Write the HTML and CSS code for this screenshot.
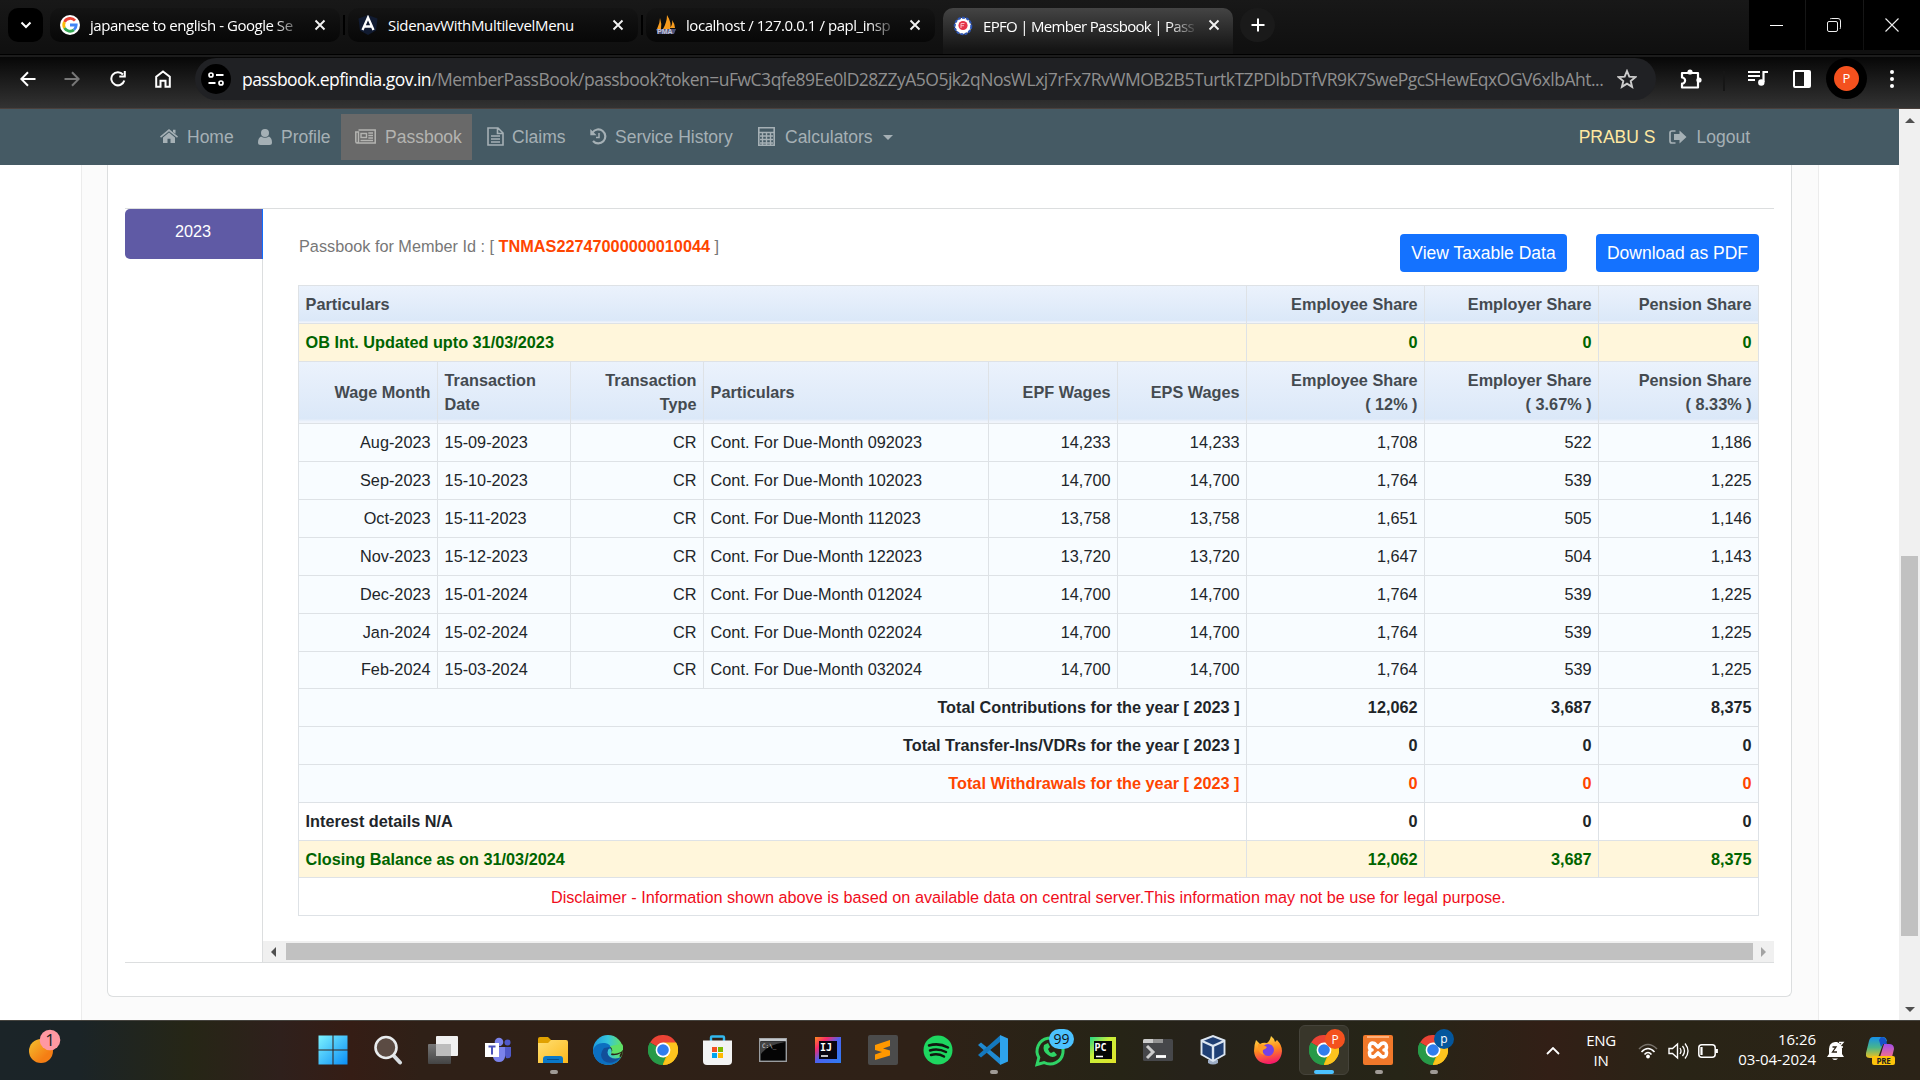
FILE: index.html
```html
<!DOCTYPE html>
<html lang="en">
<head>
<meta charset="utf-8">
<title>EPFO | Member Passbook | Passbook</title>
<link rel="stylesheet" href="styles.css">
</head>
<body>
<svg width="0" height="0" class="defs">
  <defs>
    <linearGradient id="gwin" x1="0" y1="0" x2="1" y2="1"><stop offset="0" stop-color="#7df3ff"/><stop offset="1" stop-color="#0a8df5"/></linearGradient>
    <linearGradient id="gfold" x1="0" y1="0" x2="1" y2="1"><stop offset="0" stop-color="#ffdf72"/><stop offset="1" stop-color="#fbb81c"/></linearGradient>
    <linearGradient id="gedge" x1="0" y1="0" x2="1" y2="0"><stop offset="0" stop-color="#1c9be0"/><stop offset=".5" stop-color="#36c6dc"/><stop offset="1" stop-color="#67e65a"/></linearGradient>
    <linearGradient id="gij" x1="0" y1="0" x2="1" y2="1"><stop offset="0" stop-color="#ff8a1c"/><stop offset=".25" stop-color="#f72a6b"/><stop offset=".5" stop-color="#4a63f0"/><stop offset="1" stop-color="#2f7cf2"/></linearGradient>
    <linearGradient id="gpc" x1="0" y1="0" x2="1" y2="1"><stop offset="0" stop-color="#21d789"/><stop offset=".4" stop-color="#c9ef3a"/><stop offset="1" stop-color="#dfe32a"/></linearGradient>
    <linearGradient id="gff" x1="0.3" y1="0" x2=".5" y2="1"><stop offset="0" stop-color="#ffe14a"/><stop offset=".5" stop-color="#ff8a1e"/><stop offset="1" stop-color="#f5156c"/></linearGradient>
    <linearGradient id="gcop" x1="0" y1="0" x2="0" y2="1"><stop offset="0" stop-color="#1690e8"/><stop offset=".5" stop-color="#49b58a"/><stop offset="1" stop-color="#f2c11c"/></linearGradient>
    <linearGradient id="gcop2" x1="0" y1="0" x2="0" y2="1"><stop offset="0" stop-color="#a14de8"/><stop offset="1" stop-color="#f4708c"/></linearGradient>
    <linearGradient id="gsun" x1="0" y1="0" x2="1" y2="1"><stop offset="0" stop-color="#f4c22f"/><stop offset=".7" stop-color="#f57e14"/></linearGradient>
    <linearGradient id="gview" x1="0" y1="0" x2="0" y2="1"><stop offset="0" stop-color="#777"/><stop offset="1" stop-color="#444"/></linearGradient>
    <symbol id="chrome" viewBox="0 0 30 30">
      <path d="M15 15L2 7.500A15 15 0 0 1 28 7.500z" fill="#ea4335"/>
      <path d="M15 15L28 7.500A15 15 0 0 1 15 30z" fill="#fbbc05"/>
      <path d="M15 15L15 30A15 15 0 0 1 2 7.500z" fill="#2a9e4b"/>
      <path d="M15 7.500H28A15 15 0 0 1 15 30L21.500 18.700z" fill="#fcc31e"/>
      <path d="M2 7.500L8.500 18.700A7.500 7.500 0 0 0 18 21.800L14.500 30A15 15 0 0 1 2 7.500z" fill="#279a48"/>
      <circle cx="15" cy="15" r="7.400" fill="#fff"/><circle cx="15" cy="15" r="5.800" fill="#2f7ded"/>
    </symbol>
    <symbol id="x" viewBox="0 0 12 12"><path d="M1.500 1.500l9 9M10.500 1.500l-9 9" stroke="#f2f2f2" stroke-width="1.900" fill="none"/></symbol>
  </defs>
</svg>

<header class="tabstrip">
  <div class="tab-search"><svg width="12" height="8" viewBox="0 0 12 8"><path d="M1.500 1.500L6 6l4.500-4.500" fill="none" stroke="#fff" stroke-width="2"/></svg></div>
  <div class="tab tab-a">
    <svg class="fav" width="20" height="20" viewBox="0 0 20 20"><circle cx="10" cy="10" r="10" fill="#fff"/><path d="M15 5.700A6.300 6.300 0 0 0 4.500 7" fill="none" stroke="#ea4335" stroke-width="2.800"/><path d="M4.500 7a6.300 6.300 0 0 0 0 6" fill="none" stroke="#fbbc05" stroke-width="2.800"/><path d="M4.500 13A6.300 6.300 0 0 0 14 14.800" fill="none" stroke="#34a853" stroke-width="2.800"/><path d="M14 14.800a6.300 6.300 0 0 0 2.200-4.800H10" fill="none" stroke="#4285f4" stroke-width="2.800"/></svg>
    <span class="tab-title fade">japanese to english - Google Se</span>
    <svg class="close" width="12" height="12"><use href="#x"/></svg>
  </div>
  <i class="tab-sep"></i>
  <div class="tab tab-b">
    <svg class="fav" width="20" height="20" viewBox="0 0 20 20"><path d="M10 0l9.500 3.500-1.500 12L10 20l-8-4.500-1.500-12z" fill="#111b31"/><path d="M4.500 15L10 2.500 15.500 15M6.500 11.500h7" fill="none" stroke="#fff" stroke-width="2.300"/></svg>
    <span class="tab-title">SidenavWithMultilevelMenu</span>
    <svg class="close" width="12" height="12"><use href="#x"/></svg>
  </div>
  <i class="tab-sep"></i>
  <div class="tab tab-c">
    <svg class="fav" width="20" height="20" viewBox="0 0 20 20"><path d="M1 14Q4 8 4 3q2 6 1 11zM7 14q4-7 4-14 5 8 3 14zM14 13q3-4 2-8 3 4 3 8z" fill="#f89c1e"/><path d="M0 14h20l-2 5H2z" fill="#4f5479"/><text x="1" y="19" class="pma">PMA</text></svg>
    <span class="tab-title fade">localhost / 127.0.0.1 / papl_insp</span>
    <svg class="close" width="12" height="12"><use href="#x"/></svg>
  </div>
  <div class="tab tab-d">
    <svg class="fav" width="20" height="20" viewBox="0 0 20 20"><circle cx="10" cy="10" r="8.300" fill="#fff" stroke="#2d55b5" stroke-width="2" stroke-dasharray="3 1.200"/><circle cx="10" cy="9.500" r="4.600" fill="#e5344a"/><path d="M8 12V7.500h3.500M8 9.700h3" stroke="#f7b8bf" fill="none"/></svg>
    <span class="tab-title fade">EPFO | Member Passbook | Pass</span>
    <svg class="close" width="12" height="12"><use href="#x"/></svg>
  </div>
  <div class="new-tab"><svg width="14" height="14" viewBox="0 0 14 14"><path d="M7 .5v13M.5 7h13" stroke="#fff" stroke-width="2"/></svg></div>
  <div class="win-buttons">
    <span class="wb"><svg width="14" height="14"><path d="M0 7.500h13" stroke="#fff"/></svg></span>
    <span class="wb"><svg width="14" height="14" viewBox="0 0 14 14"><path d="M.5 5q0-1.500 1.500-1.500h7q1.500 0 1.500 1.500v7q0 1.500-1.500 1.500H2Q.5 13.500.5 12zM3 1q.5-.5 1.500-.5H11Q13.500.5 13.500 3v6.500q0 1-.7 1.500" fill="none" stroke="#eee"/></svg></span>
    <span class="wb"><svg width="14" height="14"><path d="M.5.500l13 13M13.500.500l-13 13" stroke="#eee" stroke-width="1.100"/></svg></span>
  </div>
</header>

<div class="toolbar">
  <svg class="tb back" width="16" height="16" viewBox="0 0 16 16"><path d="M15.500 8H1.500M8 1.200L1.300 8 8 14.800" fill="none" stroke="#fff" stroke-width="2"/></svg>
  <svg class="tb fwd" width="16" height="16" viewBox="0 0 16 16"><path d="M.5 8h14M8 1.200L14.700 8 8 14.800" fill="none" stroke="#777" stroke-width="2"/></svg>
  <svg class="tb reload" width="16" height="16" viewBox="0 0 16 16"><path d="M14.300 9.500A6.600 6.600 0 1 1 13 3.500" fill="none" stroke="#fff" stroke-width="2"/><path d="M15.800 0v6.500H9.300V4.600h4.500V0z" fill="#fff"/></svg>
  <svg class="tb home" width="16" height="18" viewBox="0 0 16 18"><path d="M1.200 16.800V6.800L8 1.500l6.800 5.300v10h-4.300v-6h-5v6z" fill="none" stroke="#fff" stroke-width="2"/></svg>
  <div class="omnibox">
    <span class="site"><svg width="16" height="14" viewBox="0 0 16 14"><circle cx="3" cy="3" r="2" fill="none" stroke="#fff" stroke-width="1.700"/><path d="M8 3h7.500M.5 11h7" stroke="#fff" stroke-width="1.800"/><circle cx="13" cy="11" r="2" fill="none" stroke="#fff" stroke-width="1.700"/></svg></span>
    <span class="url"><b>passbook.epfindia.gov.in</b><span class="path">/MemberPassBook/passbook?token=uFwC3qfe89Ee0lD28ZZyA5O5jk2qNosWLxj7rFx7RvWMOB2B5TurtkTZPDIbDTfVR9K7SwePgcSHewEqxOGV6xlbAht...</span></span>
    <svg class="star" width="20" height="20" viewBox="0 0 20 20"><path d="M10 2l2.300 5.600 6 .5-4.600 3.900 1.400 5.900L10 14.700l-5.100 3.200 1.400-5.900L1.700 8.100l6-.5z" fill="none" stroke="#ccc" stroke-width="1.900"/></svg>
  </div>
  <svg class="tb puzzle" width="22" height="22" viewBox="0 0 22 22"><path d="M2 5h16v14.500H2v-3.800a3 3 0 0 0 0-6.200z" fill="none" stroke="#fff" stroke-width="2.200" stroke-linejoin="round"/><circle cx="10" cy="4" r="2.600" fill="#fff"/><circle cx="19" cy="12" r="2.600" fill="#fff"/></svg>
  <i class="tb-sep"></i>
  <svg class="tb music" width="20" height="16" viewBox="0 0 20 16"><path d="M0 2h12M0 6h12M0 10h7" stroke="#fff" stroke-width="1.900"/><path d="M15.500 12V2H20" fill="none" stroke="#fff" stroke-width="2.200"/><circle cx="13.300" cy="12.500" r="3.200" fill="#fff"/></svg>
  <svg class="tb panel" width="18" height="18" viewBox="0 0 18 18"><rect x="1" y="1" width="16" height="16" rx="1" fill="none" stroke="#fff" stroke-width="2"/><path d="M11 1h6v16h-6z" fill="#fff"/></svg>
  <span class="avatar"><span>P</span></span>
  <svg class="tb dots" width="4" height="18" viewBox="0 0 4 18"><circle cx="2" cy="2" r="2" fill="#fff"/><circle cx="2" cy="9" r="2" fill="#fff"/><circle cx="2" cy="16" r="2" fill="#fff"/></svg>
</div>

<div class="viewport">
  <div class="site-page">
    <nav class="nav">
      <a class="n-home"><svg width="18" height="15" viewBox="0 0 18 15"><path d="M9 0l9 7.500-1 1.200L9 2.200 1 8.700 0 7.500zM13 .8h2.500v4L13 3zM9 3.500l6 5V14h-4.500v-4.300h-3V14H3V8.500z" fill="currentColor"/></svg><span>Home</span></a>
      <a class="n-profile"><svg width="14" height="16" viewBox="0 0 14 16"><circle cx="7" cy="4" r="4" fill="currentColor"/><path d="M3 7.500Q7 10 11 7.500q3 1.500 3 6 0 2.500-2.500 2.500h-9Q0 16 0 13.500q0-4.500 3-6z" fill="currentColor"/></svg><span>Profile</span></a>
      <a class="n-pass"><svg width="21" height="15" viewBox="0 0 21 15"><path d="M3.500 1h16.700v13H2Q.8 14 .8 12.500V3H3.500v9.500q0 1.500-1.500 1.500" fill="none" stroke="currentColor" stroke-width="1.500"/><path d="M6 4.500h5.500v4H6zM13.300 4h4.700M13.300 6.500h4.700M13.300 9h4.700M5.500 11.500h12.500" fill="none" stroke="currentColor" stroke-width="1.400"/></svg><span>Passbook</span></a>
      <a class="n-claims"><svg width="17" height="19" viewBox="0 0 17 19"><path d="M1 1h10l5 5v12H1zM10.500 1v5.500H16M4 9h9M4 12h9M4 15h9" fill="none" stroke="currentColor" stroke-width="1.600"/></svg><span>Claims</span></a>
      <a class="n-history"><svg width="17" height="17" viewBox="0 0 17 17"><path d="M2.500 4.500A7 7 0 1 1 3 13" fill="none" stroke="currentColor" stroke-width="2.200"/><path d="M.3 1v6.300h6.300z" fill="currentColor"/><path d="M9 5v4.500H6" fill="none" stroke="currentColor" stroke-width="1.500"/></svg><span>Service History</span></a>
      <a class="n-calc"><svg width="17" height="19" viewBox="0 0 17 19"><path d="M.8.800h15.400v17.400H.8zM.8 5.500h15.400" fill="none" stroke="currentColor" stroke-width="1.600"/><path d="M2 9h13M2 12.500h13M2 16h13M4.500 6v12M8.500 6v12M12.500 6v12" stroke="currentColor" stroke-width="1.400"/></svg><span>Calculators</span><i class="caret"></i></a>
      <span class="user">PRABU S</span>
      <a class="n-logout"><svg width="18" height="14" viewBox="0 0 18 14"><path d="M6.500 1H3Q1 1 1 3v8q0 2 2 2h3.500" fill="none" stroke="currentColor" stroke-width="1.700"/><path d="M10.500.5L17.500 7l-7 6.500V10H5V4h5.500z" fill="currentColor"/></svg><span>Logout</span></a>
    </nav>
    <main class="outer">
      <section class="card">
        <div class="panel-box">
          <div class="years"><a class="year">2023</a></div>
          <div class="pane">
            <div class="pane-head">
              <p>Passbook for Member Id : [ <strong>TNMAS22747000000010044</strong> ]</p>
              <div class="btns"><button>View Taxable Data</button><button>Download as PDF</button></div>
            </div>
            <table class="book">
              <colgroup><col class="c1"><col class="c2"><col class="c2"><col class="c4"><col class="c5"><col class="c5"><col class="c7"><col class="c8"><col class="c9"></colgroup>
              <tbody>
              <tr class="head"><th colspan="6" class="l">Particulars</th><th>Employee Share</th><th>Employer Share</th><th>Pension Share</th></tr>
              <tr class="gold"><td colspan="6" class="l">OB Int. Updated upto 31/03/2023</td><td>0</td><td>0</td><td>0</td></tr>
              <tr class="head tall"><th>Wage Month</th><th class="l">Transaction Date</th><th>Transaction Type</th><th class="l">Particulars</th><th>EPF Wages</th><th>EPS Wages</th><th>Employee Share<br>( 12% )</th><th>Employer Share<br>( 3.67% )</th><th>Pension Share<br>( 8.33% )</th></tr>
              <tr><td>Aug-2023</td><td class="l">15-09-2023</td><td>CR</td><td class="l">Cont. For Due-Month 092023</td><td>14,233</td><td>14,233</td><td>1,708</td><td>522</td><td>1,186</td></tr>
              <tr><td>Sep-2023</td><td class="l">15-10-2023</td><td>CR</td><td class="l">Cont. For Due-Month 102023</td><td>14,700</td><td>14,700</td><td>1,764</td><td>539</td><td>1,225</td></tr>
              <tr><td>Oct-2023</td><td class="l">15-11-2023</td><td>CR</td><td class="l">Cont. For Due-Month 112023</td><td>13,758</td><td>13,758</td><td>1,651</td><td>505</td><td>1,146</td></tr>
              <tr><td>Nov-2023</td><td class="l">15-12-2023</td><td>CR</td><td class="l">Cont. For Due-Month 122023</td><td>13,720</td><td>13,720</td><td>1,647</td><td>504</td><td>1,143</td></tr>
              <tr><td>Dec-2023</td><td class="l">15-01-2024</td><td>CR</td><td class="l">Cont. For Due-Month 012024</td><td>14,700</td><td>14,700</td><td>1,764</td><td>539</td><td>1,225</td></tr>
              <tr><td>Jan-2024</td><td class="l">15-02-2024</td><td>CR</td><td class="l">Cont. For Due-Month 022024</td><td>14,700</td><td>14,700</td><td>1,764</td><td>539</td><td>1,225</td></tr>
              <tr class="short"><td>Feb-2024</td><td class="l">15-03-2024</td><td>CR</td><td class="l">Cont. For Due-Month 032024</td><td>14,700</td><td>14,700</td><td>1,764</td><td>539</td><td>1,225</td></tr>
              <tr class="total"><td colspan="6">Total Contributions for the year [ 2023 ]</td><td>12,062</td><td>3,687</td><td>8,375</td></tr>
              <tr class="total"><td colspan="6">Total Transfer-Ins/VDRs for the year [ 2023 ]</td><td>0</td><td>0</td><td>0</td></tr>
              <tr class="total orange"><td colspan="6">Total Withdrawals for the year [ 2023 ]</td><td>0</td><td>0</td><td>0</td></tr>
              <tr class="total white"><td colspan="6" class="l">Interest details N/A</td><td>0</td><td>0</td><td>0</td></tr>
              <tr class="gold short closing"><td colspan="6" class="l">Closing Balance as on 31/03/2024</td><td>12,062</td><td>3,687</td><td>8,375</td></tr>
              <tr class="disc"><td colspan="9">Disclaimer - Information shown above is based on available data on central server.This information may not be use for legal purpose.</td></tr>
              </tbody>
            </table>
            <div class="hscroll"><i class="arr-l"></i><i class="hthumb"></i><i class="arr-r"></i></div>
          </div>
        </div>
      </section>
    </main>
  </div>
  <div class="vscroll"><i class="arr-u"></i><i class="vthumb"></i><i class="arr-d"></i></div>
</div>

<footer class="taskbar">
  <div class="weather"><svg width="36" height="36" viewBox="0 0 36 36"><circle cx="14" cy="22" r="12" fill="url(#gsun)"/><circle cx="23" cy="11" r="10.300" fill="#ff98a2"/><text x="23" y="17" text-anchor="middle" class="wt">1</text></svg></div>
  <div class="apps">
    <span><svg width="30" height="30"><path d="M.5.500h14v14H.5zM15.500.500h14v14h-14zM.5 15.500h14v14H.5zM15.500 15.500h14v14h-14z" fill="url(#gwin)"/></svg></span>
    <span><svg width="30" height="30"><path d="M20 20l7 7.500" stroke="#d8dde1" stroke-width="4" stroke-linecap="round"/><circle cx="13" cy="12.500" r="10.500" fill="#5b4b43" stroke="#e9ecee" stroke-width="2.600"/></svg></span>
    <span><svg width="32" height="30"><rect x="9" y="1" width="22" height="20" rx="1" fill="#f0f0f0"/><rect x="1" y="9" width="23" height="20" rx="1" fill="url(#gview)"/><path d="M9 9h15v12H9z" fill="#bdbdbd"/></svg></span>
    <span><svg width="30" height="30"><circle cx="16" cy="7" r="4.300" fill="#7b83eb"/><circle cx="24.500" cy="7.500" r="3" fill="#5059c9"/><path d="M19 12h9v9q-1 3-5 2z" fill="#5059c9"/><path d="M10 12h12v10q-1 5-6 5t-6-5z" fill="#7b83eb"/><rect x="2" y="8" width="14" height="14" fill="#fff"/><path d="M5.500 11.500h7M9 11.500v8" stroke="#4b53bc" stroke-width="2"/></svg></span>
    <span class="run"><svg width="30" height="30"><path d="M0 4q0-2 2-2h8l3 3v6H0z" fill="#e0a100"/><path d="M0 8h10l3-3h15q2 0 2 2v21H0z" fill="url(#gfold)"/><path d="M5 28v-4q0-3 3-3h14q3 0 3 3v4z" fill="#0a78c8"/><path d="M9 24.500h12" stroke="#064f8c"/></svg></span>
    <span><svg width="30" height="30"><circle cx="15" cy="15" r="15" fill="url(#gedge)"/><path d="M0 15Q3 7 12 8q6 1 6 6-4-1-5 4t5 6q6 1 10-2-4 8-13 8Q1 29 0 15z" fill="#0c6fc0"/><path d="M11 13q-6 7 0 13 8 5 17-4-6 3-11 0-5-4 0-10z" fill="#124f9a"/><path d="M17 12q3 4 1 8 5 1 10-2-3 4 0 4 2-3 2-7z" fill="#2f2117"/><path d="M17 11q4 4 1 7 4 2 10-1 4-3 1-8z" fill="#5fe066"/></svg></span>
    <span><svg width="30" height="30"><use href="#chrome"/></svg></span>
    <span><svg width="30" height="30"><path d="M8 8V2.500Q8 1.500 9 1.500h11q1 0 1 1V8" fill="none" stroke="#32b8ee" stroke-width="2.400"/><path d="M0 5.500h29V26q0 4-4 4H4q-4 0-4-4z" fill="#f3f3f3"/><path d="M9 12h5v5H9z" fill="#f25022"/><path d="M15 12h5v5h-5z" fill="#7fba00"/><path d="M9 18h5v5H9z" fill="#00a4ef"/><path d="M15 18h5v5h-5z" fill="#ffb900"/></svg></span>
    <span><svg width="28" height="24"><rect x=".7" y=".7" width="26.600" height="22.600" fill="#050505" stroke="#9a9da0" stroke-width="1.400"/><path d="M1 2h26" stroke="#c4c8cc" stroke-width="2.500"/><path d="M2 4h24Q8 7 2 16z" fill="#444"/><text x="3" y="10" class="cmd">C:\_</text></svg></span>
    <span><svg width="26" height="26"><rect width="26" height="26" fill="url(#gij)"/><rect x="4" y="4" width="18" height="18" fill="#080410"/><text x="5" y="14" class="jb">IJ</text><path d="M6 19h7" stroke="#fff" stroke-width="1.500"/></svg></span>
    <span><svg width="30" height="30"><rect width="30" height="30" rx="2" fill="#4b4b4b"/><path d="M7 10l15-5v6l-7 2.500 7 2v5L7 25v-5.500l7-2.500-7-2z" fill="#ff9800"/></svg></span>
    <span><svg width="30" height="30"><circle cx="15" cy="15" r="14.500" fill="#1ed760"/><path d="M6 10.500q10-3 19 2M7 15.500q8-2.500 16 1.500M8 20q7-2 13 1.500" fill="none" stroke="#10180f" stroke-width="2.500" stroke-linecap="round"/></svg></span>
    <span class="run"><svg width="30" height="30"><path d="M0 10l3-2.500L22 23v6.500z" fill="#1f8ad2"/><path d="M0 20l3 2.500L22 7V.5z" fill="#1478be"/><path d="M22 0l8 3.500v23L22 30z" fill="#2ea3ec"/></svg></span>
    <span class="wa"><svg width="44" height="40"><path d="M7 36.500l1.800-7A13 13 0 1 1 14 34.500z" fill="none" stroke="#2fd366" stroke-width="3"/><path d="M14 17q-2 6 4 10 5 4 9 0l-3-3.500-3 1.500q-2-1-3-4l2-2-2-4z" fill="#2fd366"/><rect x="19" y="1" width="25" height="20" rx="10" fill="#4cc2ff"/><text x="31.500" y="16" text-anchor="middle" class="n99">99</text></svg></span>
    <span><svg width="26" height="26"><rect width="26" height="26" fill="url(#gpc)"/><rect x="4" y="4" width="18" height="18" fill="#050805"/><text x="4.500" y="13.500" class="jb">PC</text><path d="M6 19.500h7" stroke="#fff" stroke-width="1.500"/></svg></span>
    <span><svg width="30" height="22"><rect width="30" height="22" rx="1.500" fill="#46474a"/><path d="M0 4V1.500Q0 0 1.500 0H10v4z" fill="#ccc"/><path d="M10 0h10v4H10z" fill="#939393"/><path d="M4 7l6 6-6 6" fill="none" stroke="#ccc" stroke-width="3"/><path d="M13 17.500h10" stroke="#fff" stroke-width="2.800"/></svg></span>
    <span><svg width="26" height="30"><path d="M8 25h10v3q-5 3-10 0z" fill="#9dadc6"/><path d="M1.500 5.500L13 1l11.500 4.500v14L13 26 1.500 19.500z" fill="#1f3f74" stroke="#dce6f2" stroke-width="1.900"/><path d="M2 6l11 5 11-5M13 11v15" fill="none" stroke="#dce6f2" stroke-width="2.400"/></svg></span>
    <span><svg width="30" height="30"><path d="M3 5l4 4q3-2 7-1 3-2 4-7 3 2 4 6l2-2q5 5 5 11Q28 29 15 29 2 28 1 16 1 10 3 5z" fill="url(#gff)"/><circle cx="15" cy="15" r="6" fill="#7542e5"/><path d="M5 9q5 0 9 3-1 2-4 3-1 3 2 5-6-1-7-6z" fill="#ff9a24"/></svg></span>
    <span class="on badge"><svg width="36" height="36"><use href="#chrome" y="6" width="30" height="30"/><circle cx="26" cy="10" r="10" fill="#f4511e"/><text x="26" y="14.500" text-anchor="middle" class="bp">P</text></svg></span>
    <span class="run"><svg width="30" height="30"><rect width="30" height="30" rx="2" fill="#f0782a"/><path d="M4 1h22v2H4z" fill="#ffb07a"/><path d="M15 12L11.500 8.500Q6.500 7 6.500 12q0 3 2.500 3-2.500 0-2.500 3 0 5 5 3.500L15 18l3.500 3.500q5 1.500 5-3.500 0-3-2.500-3 2.500 0 2.500-3 0-5-5-3.500z" fill="none" stroke="#fff" stroke-width="3.600" stroke-linejoin="round"/></svg></span>
    <span class="run badge"><svg width="36" height="36"><use href="#chrome" y="6" width="30" height="30"/><circle cx="26" cy="10" r="10" fill="#04569c"/><text x="26" y="14" text-anchor="middle" class="bp">p</text></svg></span>
  </div>
  <div class="tray">
    <svg class="t-up" width="14" height="8"><path d="M1 7l6-6 6 6" fill="none" stroke="#fff" stroke-width="1.800"/></svg>
    <div class="lang">ENG<br>IN</div>
    <svg class="t-wifi" width="20" height="16" viewBox="0 0 20 16"><path d="M1 6q9-9 18 0" fill="none" stroke="#77726b" stroke-width="1.600"/><path d="M3.500 9q6.500-7 13 0M6.500 11.500q3.500-4 7 0" fill="none" stroke="#fff" stroke-width="1.600"/><circle cx="10" cy="13.500" r="1.900" fill="#fff"/></svg>
    <svg class="t-vol" width="21" height="18" viewBox="0 0 21 18"><path d="M1 6.500h3.500L9.500 2v14l-5-4.500H1z" fill="none" stroke="#fff" stroke-width="1.400"/><path d="M12 6q2 3 0 6M14.500 4q4 5 0 10M17 1.500q6 7.500 0 15" fill="none" stroke="#fff" stroke-width="1.300"/></svg>
    <svg class="t-bat" width="20" height="14" viewBox="0 0 20 14"><rect x=".8" y=".8" width="16.400" height="12.400" rx="3" fill="none" stroke="#fff" stroke-width="1.500"/><path d="M3.500 3v8M18.800 5v4" stroke="#fff" stroke-width="2.200"/></svg>
    <div class="clock">16:26<br>03-04-2024</div>
    <svg class="t-bell" width="18" height="20" viewBox="0 0 18 20"><path d="M2 13V8q0-6 6-7h2q5 2 5 7v5l2 3H0z" fill="#fff"/><path d="M5 17.500q3 3 6 0z" fill="#fff"/><path d="M5.500 6H9l-3.500 5H10" fill="none" stroke="#2b2317" stroke-width="1.300"/><path d="M12 1.500h4L12 6h4" fill="none" stroke="#fff" stroke-width="1.300"/></svg>
    <svg class="t-cop" width="30" height="30" viewBox="0 0 30 30"><path d="M7 1h10q3 0 4 4l-4 3-4 11q-1 3-4 3H4q-5 0-4-5L3 5q1-4 4-4z" fill="url(#gcop)"/><path d="M15 1q4 0 5 3l1 4h-4l-2 3-2-7z" fill="#1452c8"/><path d="M18 8h5q5 0 5 5l-2 8H14z" fill="url(#gcop2)"/><rect x="6" y="20" width="23" height="9" rx="2" fill="#fdc30b"/><text x="17.500" y="27.700" text-anchor="middle" class="pre">PRE</text></svg>
  </div>
</footer>
</body>
</html>
```
FILE: styles.css
```css
* { box-sizing: border-box; }
body { margin: 0; width: 1920px; height: 1080px; overflow: hidden; display: flex; flex-direction: column; background: #fff; font-family: "Liberation Sans", Arial, sans-serif; }
svg { display: block; flex: none; }
.defs { position: absolute; }
i { display: block; flex: none; }

/* tab strip */
.tabstrip { height: 55px; flex: none; display: flex; align-items: flex-start; padding: 8px 0 0 8px; background: linear-gradient(#181818, #101010 90%); border-bottom: 1px solid #000; font: 15px/34px "Open Sans", "Noto Sans", sans-serif; color: #fff; }
.tab-search { width: 35px; height: 34px; border-radius: 10px; background: #000; display: flex; align-items: center; justify-content: center; }
.tab { height: 34px; display: flex; align-items: center; padding: 0 14px 0 10px; border-radius: 10px; background: linear-gradient(#141414, #070707); flex: none; }
.tab-title { flex: 1; margin-left: 10px; white-space: nowrap; letter-spacing: -.45px; height: 34px; line-height: 35px; }
.fade { -webkit-mask-image: linear-gradient(90deg, #000 88%, rgba(0,0,0,.15)); mask-image: linear-gradient(90deg, #000 88%, rgba(0,0,0,.15)); margin-left: 7px; padding-left: 3px; }
.close { margin: -1px 0 0 14px; }
.tab-a { width: 290px; margin-left: 7px; }
.tab-a .tab-title { letter-spacing: -.47px; }
.tab-sep { width: 2px; height: 20px; background: #000; margin: 7px 3px 0; }
.tab-b { width: 290px; }
.tab-b .tab-title { letter-spacing: -.35px; }
.tab-c { width: 289px; }
.tab-c .close { margin-left: 15px; }
.tab-d { width: 290px; height: 46px; margin-left: 8px; padding: 0 14px 11px 10px; border-radius: 10px 10px 0 0; background: linear-gradient(#444, #151515 90%); }
.tab-d .tab-title { letter-spacing: -.68px; }
.new-tab { width: 35px; height: 34px; margin-left: 7px; border-radius: 17px; background: #1a1a1a; display: flex; align-items: center; justify-content: center; }
.win-buttons { margin: -8px 0 0 auto; display: flex; width: 171px; height: 50px; gap: 1px; }
.wb { flex: 1; background: #000; display: flex; align-items: center; justify-content: center; }
.pma { font: bold 7px "Liberation Sans", sans-serif; fill: #c3c6dd; }

/* toolbar */
.toolbar { height: 54px; flex: none; display: flex; align-items: center; background: linear-gradient(#070707, #333); border-top: 2px solid #1c1c1c; border-bottom: 1px solid #4a403c; }
.tb { margin-top: -7px; }
.back { margin-left: 20px; }
.fwd { margin-left: 28px; }
.reload { margin-left: 30px; }
.home { margin-left: 29px; }
.omnibox { margin: 0 0 7px 24px; width: 1461px; height: 42px; border-radius: 21px; background: #202124; display: flex; align-items: center; padding: 0 19px 0 6px; }
.site { width: 30px; height: 30px; border-radius: 50%; background: #000; display: flex; align-items: center; justify-content: center; }
.url { margin-left: 11px; width: 1366px; font: 17.5px/30px "Open Sans", "Noto Sans", sans-serif; white-space: nowrap; color: #8f8f8f; }
.url b { font-weight: 400; color: #fff; letter-spacing: -.55px; }
.path { letter-spacing: -.49px; }
.star { margin-left: 9px; }
.puzzle { margin: -8px 0 0 24px; }
.tb-sep { width: 2px; height: 20px; margin: -4px 0 0 21px; background: #161616; }
.music { margin: -10px 0 0 23px; }
.panel { margin-left: 25px; }
.avatar { margin: -8px 0 0 15px; width: 41px; height: 41px; border-radius: 50%; background: #000; display: flex; align-items: center; justify-content: center; }
.avatar span { width: 25px; height: 25px; border-radius: 50%; background: #f4511e; color: #fff; font: 13px/25px "Open Sans", sans-serif; text-align: center; }
.dots { margin-left: 23px; }

/* page */
.viewport { height: 911px; flex: none; display: flex; }
.site-page { width: 1899px; }
.nav { height: 56px; background: #455a64; display: flex; align-items: center; color: #a5b0b5; font-size: 17.5px; line-height: 46px; white-space: nowrap; }
.nav a { display: flex; align-items: center; height: 46px; }
.nav a svg { margin-top: -1px; }
.n-home { width: 98px; margin-left: 160px; gap: 9px; }
.n-profile { width: 83px; gap: 9px; }
.n-profile + .n-pass { width: 131px; padding-left: 14px; gap: 9px; background: #696969; color: #b4b4b1; }
.n-claims { width: 103px; padding-left: 0; margin-left: 15px; gap: 8px; }
.n-history { width: 168px; gap: 8px; }
.n-calc { gap: 10px; }
.caret { border: 5px solid transparent; border-top-color: currentColor; border-bottom: 0; }
.user { margin-left: auto; color: #ffe8a1; }
.n-logout { margin: 0 149px 0 14px; gap: 9px; }
.outer { margin-left: 81px; width: 1738px; height: 855px; padding: 0 26px; background: #fbfbfb; border: solid #ececec; border-width: 0 1px; }
.card { height: 832px; background: #fff; border: 1px solid #dcdedf; border-top: 0; border-radius: 0 0 6px 6px; padding: 43px 16px 0 17px; margin: 0 0 0 -1px; width: 1685px; }
.panel-box { width: 1649px; height: 755px; border: solid #dcdedf; border-width: 1px 0; display: flex; }
.years { width: 138px; border-right: 1px solid #dcdedf; }
.year { display: block; width: 138px; height: 50px; background: #5f5aa5; border-right: 1px solid #0d6efd; border-radius: 5px 0 0 5px; color: #fff; font-size: 16.25px; line-height: 45px; text-align: center; padding-right: 1px; }
.pane { width: 1511px; display: flex; flex-direction: column; padding-left: 35px; }
.pane-head { height: 76px; width: 1461px; display: flex; justify-content: space-between; font-size: 16.25px; color: #777; }
.pane-head p { margin: 25px 0 0 1px; line-height: 24px; }
.pane-head strong { color: #ff4500; }
.btns { display: flex; gap: 29px; margin-top: 25px; }
.btns button { height: 38px; border: 0; border-radius: 4px; background: #1472ff; color: #fff; font: 17.5px/36px "Liberation Sans", Arial, sans-serif; padding: 0 0 1px; width: 163px; }
.btns button:first-child { width: 167px; }

.book { flex: none; width: 1461px; table-layout: fixed; border-collapse: separate; border-spacing: 0; border: solid #dee2e6; border-width: 1px 0 0 1px; font-size: 16.25px; line-height: 24px; color: #212529; }
.book td, .book th { padding: 0 6.5px 2px 6px; height: 38px; border: solid #dee2e6; border-width: 0 1px 1px 0; text-align: right; background: #f8fcff; white-space: nowrap; }
.book th { background: linear-gradient(#ebf2fc, #dbe8f8 93%, #f0f4fb 98%); color: #444a50; }
.book .l { text-align: left; padding-left: 6.6px; }
.book .tall th { height: 62px; white-space: normal; }
.book .short td { height: 37px; }
.book .gold td { background: #fff6db; color: #006400; font-weight: bold; }
.book .total td { font-weight: bold; }
.book .orange td { color: #ff4500; }
.book .white td { background: #fff; }
.book .closing td { padding-bottom: 0; }
.book .disc td { background: #fff; color: #f00d1b; text-align: center; padding-bottom: 0; }
.c1 { width: 139px; } .c2 { width: 133px; } .c4 { width: 285px; } .c5 { width: 129px; } .c7 { width: 178px; } .c8 { width: 174px; } .c9 { width: 160px; }

.hscroll { margin: auto 0 0 -35px; height: 21px; background: #f0f0f0; display: flex; align-items: center; padding: 0 7px 0 8px; width: 1511px; }
.arr-l { border: 5px solid transparent; border-right-color: #505050; border-left: 0; }
.hthumb { width: 1467px; height: 17px; background: #c1c1c1; margin: 0 8px 0 10px; }
.arr-r { border: 5px solid transparent; border-left-color: #a3a3a3; border-right: 0; }
.vscroll { width: 21px; background: #f0f0f0; display: flex; flex-direction: column; align-items: center; padding-top: 9px; }
.arr-u { border: 5px solid transparent; border-bottom-color: #505050; border-top: 0; }
.vthumb { width: 17px; height: 380px; background: #c1c1c1; margin-top: 433px; }
.arr-d { border: 5px solid transparent; border-top-color: #505050; border-bottom: 0; margin-top: 71px; }

/* taskbar */
.taskbar { height: 60px; flex: none; display: flex; border-top: 1px solid #45433e; background: linear-gradient(90deg, #1b2428 0, #1b2427 80px, #262616 190px, #2f201c 280px, #351d15 350px, #2f2017 420px, #2f2117 920px, #262416 1120px, #26221a 1190px, #262517 1400px, #321f16 1550px, #292416 1680px, #2b2317 1920px); color: #fff; font-family: "Open Sans", "Noto Sans", sans-serif; }
.weather { width: 305.5px; padding: 8px 0 0 27px; flex: none; }
.wt { font: 17px "Open Sans", sans-serif; fill: #222; }
.apps { width: 1155.5px; flex: none; display: grid; grid-template-columns: repeat(21, 55.02px); }
.apps span { height: 58px; display: flex; align-items: center; justify-content: center; position: relative; }
.apps .wa { align-items: flex-start; padding: 7px 0 0 8px; }
.apps .badge { align-items: flex-start; padding: 8px 0 0 6px; }
.run::after { content: ""; position: absolute; left: 24px; top: 49px; width: 8px; height: 4px; border-radius: 2px; background: #a09b96; }
.apps .on { background: #38362a; border: 1px solid #45433a; border-radius: 6px; margin: 4px 0 0 3px; width: 50px; height: 50px; justify-content: flex-start; padding: 3px 0 0 9px; }
.on::after { content: ""; position: absolute; left: 14px; top: 44px; width: 20px; height: 4px; border-radius: 2px; background: #4cc2ff; }
.n99 { font: 14px "Open Sans", sans-serif; fill: #111; }
.bp { font: 12px "Open Sans", sans-serif; fill: #fff; }
.jb { font: bold 10px "DejaVu Sans Mono", monospace; fill: #fff; }
.cmd { font: 6px "DejaVu Sans Mono", monospace; fill: #ddd; }
.pre { font: bold 8px "Open Sans", sans-serif; fill: #222; }
.tray { flex: 1; display: flex; align-items: center; font-size: 15px; line-height: 20px; letter-spacing: -.3px; }
.t-up { margin-left: 85px; }
.lang { margin: -2px 0 0 26px; width: 30px; text-align: center; white-space: nowrap; }
.t-wifi { margin-left: 22px; }
.t-vol { margin-left: 10px; }
.t-bat { margin-left: 9px; }
.clock { margin: -3px 0 0 10px; width: 88px; text-align: right; white-space: nowrap; letter-spacing: -.05px; }
.t-bell { margin-left: 11px; }
.t-cop { margin-left: 21px; }
```
